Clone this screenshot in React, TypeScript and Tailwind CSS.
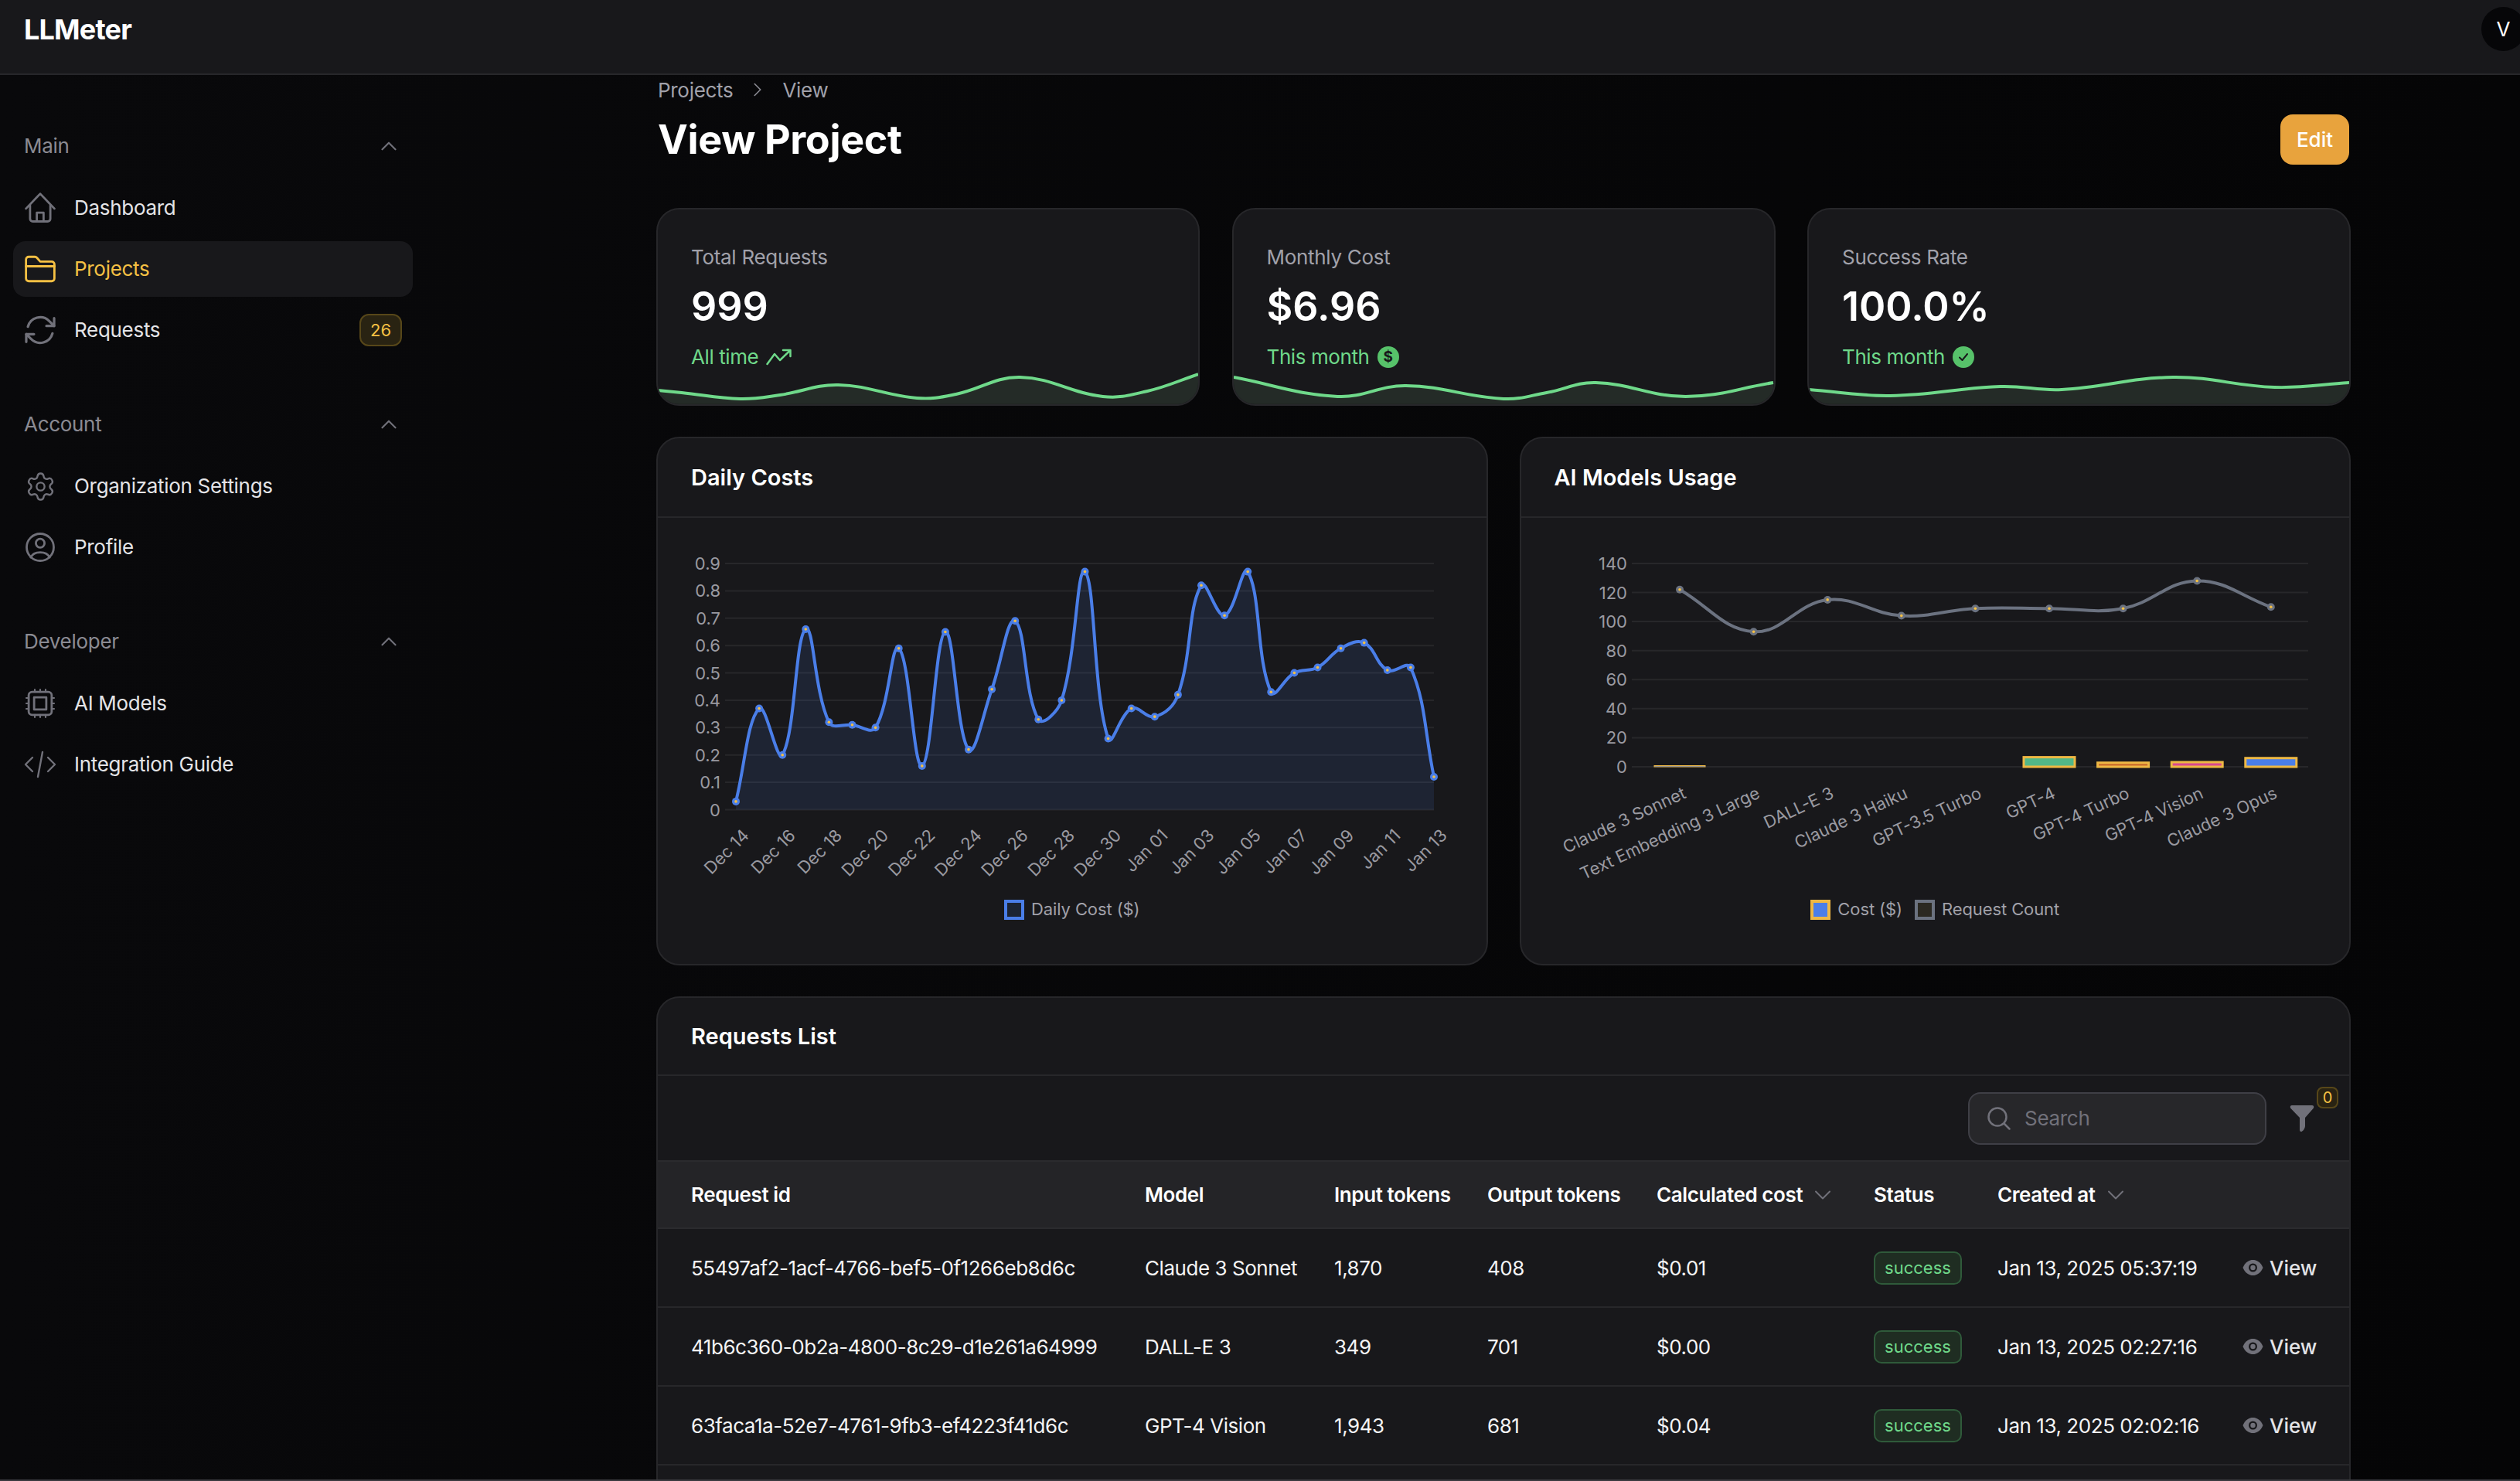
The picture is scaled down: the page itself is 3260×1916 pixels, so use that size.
import { ChevronDown, ChevronRight, ChevronUp, Settings } from 'lucide-react';
import type { ReactNode } from 'react';

type Pt = [number, number];

// same control points as a chart line with tension
function spline(pts: Pt[], t = 0.4) {
  let d = `M${pts[0][0]} ${pts[0][1]}`;
  const cp = pts.map((p, i) => {
    const a = pts[Math.max(i - 1, 0)];
    const b = pts[Math.min(i + 1, pts.length - 1)];
    const d1 = Math.hypot(p[0] - a[0], p[1] - a[1]);
    const d2 = Math.hypot(b[0] - p[0], b[1] - p[1]);
    const s = d1 + d2 || 1;
    const fa = (t * d1) / s;
    const fb = (t * d2) / s;
    return {
      prev: [p[0] - fa * (b[0] - a[0]), p[1] - fa * (b[1] - a[1])],
      next: [p[0] + fb * (b[0] - a[0]), p[1] + fb * (b[1] - a[1])],
    };
  });
  for (let i = 1; i < pts.length; i++) {
    d += ` C${cp[i - 1].next[0]} ${cp[i - 1].next[1]} ${cp[i].prev[0]} ${cp[i].prev[1]} ${pts[i][0]} ${pts[i][1]}`;
  }
  return d;
}

const costValues = [
  0.03, 0.37, 0.2, 0.66, 0.32, 0.31, 0.3, 0.59, 0.16, 0.65, 0.22, 0.44, 0.69, 0.33, 0.4, 0.87, 0.26, 0.37, 0.34, 0.42,
  0.82, 0.71, 0.87, 0.43, 0.5, 0.52, 0.59, 0.61, 0.51, 0.52, 0.12,
];
const costTicks = ['0', '0.1', '0.2', '0.3', '0.4', '0.5', '0.6', '0.7', '0.8', '0.9'];
const costLabels = [
  'Dec 14', 'Dec 16', 'Dec 18', 'Dec 20', 'Dec 22', 'Dec 24', 'Dec 26', 'Dec 28', 'Dec 30',
  'Jan 01', 'Jan 03', 'Jan 05', 'Jan 07', 'Jan 09', 'Jan 11', 'Jan 13',
];

const models = [
  { name: 'Claude 3 Sonnet', count: 122, cost: 0.8, color: '#4a7ee8' },
  { name: 'Text Embedding 3 Large', count: 93, cost: 0, color: '#4a7ee8' },
  { name: 'DALL-E 3', count: 115, cost: 0, color: '#4a7ee8' },
  { name: 'Claude 3 Haiku', count: 104, cost: 0, color: '#4a7ee8' },
  { name: 'GPT-3.5 Turbo', count: 109, cost: 0, color: '#4a7ee8' },
  { name: 'GPT-4', count: 109, cost: 6.6, color: '#52b788' },
  { name: 'GPT-4 Turbo', count: 109, cost: 2.8, color: '#c96a2c' },
  { name: 'GPT-4 Vision', count: 128, cost: 3.2, color: '#d9488f' },
  { name: 'Claude 3 Opus', count: 110, cost: 6, color: '#4a7ee8' },
];

const rows = [
  { id: '55497af2-1acf-4766-bef5-0f1266eb8d6c', model: 'Claude 3 Sonnet', input: '1,870', output: '408', cost: '$0.01', at: 'Jan 13, 2025 05:37:19' },
  { id: '41b6c360-0b2a-4800-8c29-d1e261a64999', model: 'DALL-E 3', input: '349', output: '701', cost: '$0.00', at: 'Jan 13, 2025 02:27:16' },
  { id: '63faca1a-52e7-4761-9fb3-ef4223f41d6c', model: 'GPT-4 Vision', input: '1,943', output: '681', cost: '$0.04', at: 'Jan 13, 2025 02:02:16' },
];

function Svg24({ children, box = '0 0 24 24' }: { children: ReactNode; box?: string }) {
  return (
    <svg viewBox={box} fill="none" stroke="currentColor" strokeWidth="1.6" strokeLinecap="round" strokeLinejoin="round" className="w-[42px] h-[42px]">
      {children}
    </svg>
  );
}

const HomeIcon = () => (
  <Svg24>
    <path d="M1.5 12.5 12 1.5l10.5 11" />
    <path d="M4.5 10v10a2 2 0 0 0 2 2h11a2 2 0 0 0 2-2V10" />
    <path d="M9.5 22v-6.5h5V22" />
  </Svg24>
);
const FolderIcon = () => (
  <Svg24>
    <path d="M1.5 5a2 2 0 0 1 2-2h4.6a2 2 0 0 1 1.5.7L12 6.5h8.500a2 2 0 0 1 2 2V19a2 2 0 0 1-2 2h-17a2 2 0 0 1-2-2Z" />
    <path d="M1.5 10h21" />
  </Svg24>
);
const RefreshIcon = () => (
  <Svg24 box="1.5 1.5 21 21">
    <path d="M16.02 9.35h5V4.36" />
    <path d="M2.98 19.64v-4.99h5" />
    <path d="M2.98 14.65l3.18 3.18a8.25 8.25 0 0 0 13.8-3.7" />
    <path d="M4.03 9.87a8.25 8.25 0 0 1 13.8-3.7l3.18 3.18" />
  </Svg24>
);
const ProfileIcon = () => (
  <Svg24>
    <circle cx="12" cy="12" r="10" />
    <circle cx="12" cy="9" r="3.2" />
    <path d="M5 19.500c1.200-2.600 4-3.700 7-3.700s5.800 1.100 7 3.700" />
  </Svg24>
);
const CpuIcon = () => (
  <Svg24>
    <rect x="3.500" y="3.500" width="17" height="17" rx="2.500" />
    <rect x="7.500" y="7.500" width="9" height="9" />
    <path d="M8 1.700v1.800M12 1.700v1.800M16 1.700v1.800M8 20.500v1.800M12 20.500v1.800M16 20.500v1.800M1.700 8h1.800M1.700 12h1.800M1.700 16h1.800M20.500 8h1.800M20.500 12h1.800M20.500 16h1.800" strokeWidth="1.200" />
  </Svg24>
);
const CodeIcon = () => (
  <svg viewBox="0 0 42 38" fill="none" stroke="currentColor" strokeWidth="2.400" strokeLinecap="round" strokeLinejoin="round" className="w-[42px] h-[38px]">
    <path d="M11 10 2 19l9 9M31 10l9 9-9 9M24 3l-6 32" />
  </svg>
);

function NavItem({ icon, label, active, badge }: { icon: ReactNode; label: string; active?: boolean; badge?: string }) {
  return (
    <div className={`flex items-center h-[72px] pl-[14px] pr-[14px] rounded-[16px] ${active ? 'bg-[#18181b]' : ''}`}>
      <span className={`w-[42px] h-[42px] flex items-center justify-center shrink-0 ${active ? 'text-[#f5c043]' : 'text-[#71717a]'}`}>{icon}</span>
      <span className={`ml-[23px] flex-1 text-[26px] leading-[32px] tracking-[-0.3px] ${active ? 'text-[#f5c043]' : 'text-[#e4e4e7]'}`}>{label}</span>
      {badge && (
        <span className="w-[55px] h-[42px] flex items-center justify-center rounded-[12px] border-2 border-[#574719] bg-[#292312] text-[22px] text-[#f5c043]">{badge}</span>
      )}
    </div>
  );
}

function NavSection({ title, children }: { title: string; children: ReactNode }) {
  return (
    <div className="mb-[70px]">
      <div className="flex items-center justify-between px-[14px] h-[32px] mb-[28px]">
        <span className="text-[26px] leading-[32px] tracking-[-0.3px] text-[#8b8b93]">{title}</span>
        <ChevronUp size={34} strokeWidth={1.500} className="text-[#71717a]" />
      </div>
      <div className="flex flex-col gap-[7px]">{children}</div>
    </div>
  );
}

function StatCard({ label, value, sub, icon, line }: { label: string; value: string; sub: string; icon: ReactNode; line: Pt[] }) {
  const d = spline(line);
  return (
    <div className="h-[256px] rounded-[30px] border-2 border-[#27272a] bg-[#18181b] overflow-hidden flex flex-col">
      <div className="px-[43px] pt-[46px] flex-1">
        <div className="text-[26px] leading-[32px] tracking-[-0.3px] text-[#a1a1aa]">{label}</div>
        <div className="mt-[18px] text-[52px] leading-[60px] font-semibold text-white">{value}</div>
        <div className="mt-[19px] flex items-center gap-[10px] text-[26px] leading-[32px] tracking-[-0.4px] text-[#6fd98a]">
          {sub}
          {icon}
        </div>
      </div>
      <svg viewBox="0 0 703 45" className="block w-full h-[45px] shrink-0">
        <path d={`${d} L703 45 L0 45 Z`} fill="#242b27" />
        <path d={d} fill="none" stroke="#6fd98a" strokeWidth="4" />
      </svg>
    </div>
  );
}

function ChartCard({ title, children }: { title: string; children: ReactNode }) {
  return (
    <div className="h-[684px] rounded-[30px] border-2 border-[#27272a] bg-[#18181b] overflow-hidden flex flex-col">
      <div className="h-[103px] shrink-0 border-b-2 border-[#27272a] flex items-center px-[43px] text-[29px] font-semibold text-white">{title}</div>
      {children}
    </div>
  );
}

function LegendItem({ label, border, fill }: { label: string; border: string; fill: string }) {
  return (
    <span className="flex items-center gap-[9px]">
      <span className={`w-[26px] h-[26px] border-4 ${border} ${fill}`} />
      <span className="text-[22px] tracking-[-0.1px] text-[#a1a1aa]">{label}</span>
    </span>
  );
}

function DailyCostChart() {
  const yOf = (v: number) => 1047.5 - v * 353.9;
  const xOf = (i: number) => 952 + i * 30.1;
  const pts = costValues.map((v, i) => [xOf(i), yOf(v)] as Pt);
  const d = spline(pts);
  return (
    <svg viewBox="851 670 1071 480" className="block w-[1071px] h-[480px] shrink-0">
      {costTicks.map((t, i) => (
        <g key={t}>
          <line x1="938" x2="1855" y1={yOf(i / 10)} y2={yOf(i / 10)} stroke="#27272a" strokeWidth="2" />
          <text x="932" y={yOf(i / 10) + 8} textAnchor="end" className="text-[22px] fill-[#9a9aa1]">{t}</text>
        </g>
      ))}
      <path d={`${d} L1855 1047.500 L952 1047.500 Z`} fill="#4a7ee8" fillOpacity="0.12" />
      <path d={d} fill="none" stroke="#4a7ee8" strokeWidth="4" />
      {pts.map(p => (
        <g key={p[0]}>
          <circle cx={p[0]} cy={p[1]} r="5" fill="#4a7ee8" />
          <circle cx={p[0]} cy={p[1]} r="1.800" fill="#f5c043" />
        </g>
      ))}
      {costLabels.map((l, i) => (
        <text key={l} transform={`translate(${xOf(i * 2) + 14} 1078) rotate(-45)`} textAnchor="end" dominantBaseline="middle" className="text-[22px] fill-[#9a9aa1]">{l}</text>
      ))}
    </svg>
  );
}

function ModelsChart() {
  const yOf = (v: number) => 992 - v * 1.879;
  const xOf = (i: number) => 2172 + i * 95.6;
  const pts = models.map((m, i) => [xOf(i), yOf(m.count)] as Pt);
  return (
    <svg viewBox="1967 670 1071 480" className="block w-[1071px] h-[480px] shrink-0">
      {[0, 20, 40, 60, 80, 100, 120, 140].map(t => (
        <g key={t}>
          <line x1="2110" x2="2985" y1={yOf(t)} y2={yOf(t)} stroke="#27272a" strokeWidth="2" />
          <text x="2104" y={yOf(t) + 8} textAnchor="end" className="text-[22px] fill-[#9a9aa1]">{t}</text>
        </g>
      ))}
      {models.map((m, i) =>
        m.cost > 0 ? (
          <rect
            key={m.name}
            x={xOf(i) - 33}
            y={yOf(m.cost)}
            width="66"
            height={m.cost * 1.879}
            fill={m.color}
            stroke="#eeb844"
            strokeWidth={m.cost < 2 ? 1 : 3}
          />
        ) : null,
      )}
      <path d={spline(pts)} fill="none" stroke="#6b7280" strokeWidth="4" />
      {pts.map(p => (
        <g key={p[0]}>
          <circle cx={p[0]} cy={p[1]} r="5" fill="#6b7280" />
          <circle cx={p[0]} cy={p[1]} r="1.800" fill="#f5c043" />
        </g>
      ))}
      {models.map((m, i) => (
        <text key={m.name} transform={`translate(${xOf(i) + 7} 1026) rotate(-25)`} textAnchor="end" dominantBaseline="middle" className="text-[22px] fill-[#9a9aa1]">{m.name}</text>
      ))}
    </svg>
  );
}

function EyeIcon() {
  return (
    <svg viewBox="0 0 27 22" className="w-[27px] h-[22px] shrink-0">
      <path d="M0.500 11C3.500 3.500 9 1 13.500 1S23.500 3.500 26.500 11C23.500 18.500 18 21 13.500 21S3.500 18.500 0.500 11Z" fill="#71717a" />
      <circle cx="13.500" cy="11" r="5.500" fill="#18181b" />
      <circle cx="13.500" cy="11" r="3.200" fill="#71717a" />
    </svg>
  );
}

function HeadCell({ children, sort }: { children: ReactNode; sort?: boolean }) {
  return (
    <th className="pl-[43px] text-left text-[26px] font-semibold tracking-[-0.4px] text-white whitespace-nowrap">
      <span className="flex items-center">
        {children}
        {sort && <ChevronDown size={36} strokeWidth={1.300} className="ml-[8px] text-[#71717a]" />}
      </span>
    </th>
  );
}

export default function App() {
  return (
    <div className="w-[3260px] h-[1916px] overflow-hidden flex flex-col bg-gradient-to-r from-[#09090b] to-[#050506] font-[Inter,sans-serif]">
      <header className="h-[97px] shrink-0 bg-[#18181b] border-b-2 border-[#27272a] overflow-hidden pl-[31px]">
        <div className="mt-[9px] h-[57px] flex items-center justify-between">
          <span className="text-[36px] font-bold text-white tracking-[-0.8px]">LLMeter</span>
          <span className="w-[57px] h-[57px] -mr-[7px] rounded-full bg-[#060608] flex items-center justify-center text-[26px] text-white">V</span>
        </div>
      </header>

      <div className="flex flex-1 min-h-0">
        <aside className="w-[540px] shrink-0 pl-[17px] pr-[6px] pt-[76px]">
          <NavSection title="Main">
            <NavItem icon={<HomeIcon />} label="Dashboard" />
            <NavItem icon={<FolderIcon />} label="Projects" active />
            <NavItem icon={<RefreshIcon />} label="Requests" badge="26" />
          </NavSection>
          <NavSection title="Account">
            <NavItem icon={<Settings size={41} strokeWidth={1.400} />} label="Organization Settings" />
            <NavItem icon={<ProfileIcon />} label="Profile" />
          </NavSection>
          <NavSection title="Developer">
            <NavItem icon={<CpuIcon />} label="AI Models" />
            <NavItem icon={<CodeIcon />} label="Integration Guide" />
          </NavSection>
        </aside>

        <main className="flex-1 min-w-0 overflow-hidden pl-[309px] pr-[219px] pt-[3px]">
          <div className="flex items-center h-[32px] pl-[2px] text-[26px] tracking-[-0.3px] text-[#a1a1aa]">
            Projects
            <ChevronRight size={30} strokeWidth={1.300} className="mx-[17px] text-[#8b8b93]" />
            View
          </div>
          <div className="mt-[16px] h-[65px] flex items-center justify-between">
            <h1 className="pl-[2px] text-[52px] font-bold tracking-[-0.35px] text-white">View Project</h1>
            <button className="w-[89px] h-[65px] mr-[2px] rounded-[16px] bg-[#e8a33d] text-[26px] font-medium text-white">Edit</button>
          </div>

          <div className="mt-[56px] grid grid-cols-3 gap-[41.500px]">
            <StatCard
              label="Total Requests"
              value="999"
              sub="All time"
              line={[[0, 27], [31, 30], [107, 38], [159, 33], [235, 20], [337, 37], [388, 32], [471, 10], [579, 35], [637, 28], [703, 6]]}
              icon={
                <svg viewBox="0 0 33 22" fill="none" stroke="currentColor" strokeWidth="2.500" strokeLinecap="round" strokeLinejoin="round" className="w-[33px] h-[22px]">
                  <path d="M1.500 20 11 7l7 8L31 2.500M22 2h9.500v8" />
                </svg>
              }
            />
            <StatCard
              label="Monthly Cost"
              value="$6.96"
              sub="This month"
              line={[[0, 10], [135, 35], [224, 21], [351, 38], [407, 30], [471, 17], [588, 35], [702, 17]]}
              icon={<span className="w-[28px] h-[28px] rounded-full bg-[#57c26a] flex items-center justify-center text-[19px] font-bold text-[#18181b]">$</span>}
            />
            <StatCard
              label="Success Rate"
              value="100.0%"
              sub="This month"
              line={[[0, 26], [106, 34], [249, 22], [329, 26], [474, 10], [606, 23], [703, 17]]}
              icon={
                <span className="w-[28px] h-[28px] rounded-full bg-[#57c26a] flex items-center justify-center">
                  <svg viewBox="0 0 16 16" fill="none" stroke="#18181b" strokeWidth="2" strokeLinecap="round" strokeLinejoin="round" className="w-[16px] h-[16px]">
                    <path d="M3 8.500 6.500 12 13 4" />
                  </svg>
                </span>
              }
            />
          </div>

          <div className="mt-[40px] grid grid-cols-2 gap-[41px]">
            <ChartCard title="Daily Costs">
              <DailyCostChart />
              <div className="mt-[10px] flex justify-center">
                <LegendItem label="Daily Cost ($)" border="border-[#4a7ee8]" fill="bg-[#1c2433]" />
              </div>
            </ChartCard>
            <ChartCard title="AI Models Usage">
              <ModelsChart />
              <div className="mt-[10px] flex justify-center gap-[16px]">
                <LegendItem label="Cost ($)" border="border-[#eeb844]" fill="bg-[#4a7ee8]" />
                <LegendItem label="Request Count" border="border-[#6b7280]" fill="bg-[#2b2922]" />
              </div>
            </ChartCard>
          </div>

          <div className="mt-[40px] h-[700px] rounded-t-[30px] border-2 border-[#27272a] bg-[#18181b] overflow-hidden">
            <div className="h-[101px] border-b-2 border-[#27272a] flex items-center px-[43px] text-[29px] font-semibold text-white">Requests List</div>
            <div className="h-[109px] flex items-center justify-end pr-[45px]">
              <div className="w-[386px] h-[68px] rounded-[16px] border-2 border-[#3f3f46] bg-[#27272a] flex items-center pl-[23px]">
                <svg viewBox="0 0 30 30" fill="none" stroke="#71717a" strokeWidth="2.500" strokeLinecap="round" className="w-[30px] h-[30px]">
                  <circle cx="13" cy="13" r="11.500" />
                  <path d="M22 22l6.500 6.500" />
                </svg>
                <span className="ml-[18px] text-[26px] tracking-[-0.3px] text-[#71717a]">Search</span>
              </div>
              <div className="relative ml-[30px] w-[32px] h-[36px]">
                <svg viewBox="0 0 32 36" className="w-[32px] h-[36px]">
                  <path d="M3 1H29Q32 1 31 4.500L20 17V28Q20 30 18 33L15.500 35Q13 35.500 13 33V17L1 4.500Q0 1 3 1Z" fill="#71717a" />
                </svg>
                <span className="absolute -top-[23px] left-[35px] w-[28px] h-[28px] rounded-[8px] border-2 border-[#574719] bg-[#292312] flex items-center justify-center text-[20px] text-[#f5c043]">0</span>
              </div>
            </div>
            <table className="w-[2188px] table-fixed border-collapse">
              <colgroup>
                <col className="w-[587px]" />
                <col className="w-[245px]" />
                <col className="w-[198px]" />
                <col className="w-[219px]" />
                <col className="w-[281px]" />
                <col className="w-[160px]" />
                <col className="w-[317px]" />
                <col className="w-[181px]" />
              </colgroup>
              <thead>
                <tr className="h-[87px] bg-[#242427] border-y-2 border-[#2b2b2e]">
                  <HeadCell>Request id</HeadCell>
                  <HeadCell>Model</HeadCell>
                  <HeadCell>Input tokens</HeadCell>
                  <HeadCell>Output tokens</HeadCell>
                  <HeadCell sort>Calculated cost</HeadCell>
                  <HeadCell>Status</HeadCell>
                  <HeadCell sort>Created at</HeadCell>
                  <th />
                </tr>
              </thead>
              <tbody>
                {rows.map(row => (
                  <tr key={row.id} className="h-[102px] border-b-2 border-[#27272a] text-[26px] tracking-[-0.45px] text-[#f4f4f5]">
                    <td className="pl-[43px] whitespace-nowrap">{row.id}</td>
                    <td className="pl-[43px] whitespace-nowrap">{row.model}</td>
                    <td className="pl-[43px]">{row.input}</td>
                    <td className="pl-[43px]">{row.output}</td>
                    <td className="pl-[43px]">{row.cost}</td>
                    <td className="pl-[43px]">
                      <span className="inline-flex items-center justify-center w-[114px] h-[43px] rounded-[10px] border-2 border-[#2f5a3a] bg-[#1f2d22] text-[22px] tracking-normal text-[#6fd98a]">success</span>
                    </td>
                    <td className="pl-[43px] whitespace-nowrap">{row.at}</td>
                    <td className="pl-[43px]">
                      <span className="flex items-center gap-[8px] font-medium tracking-normal text-[#e4e4e7]">
                        <EyeIcon />
                        View
                      </span>
                    </td>
                  </tr>
                ))}
              </tbody>
            </table>
          </div>
        </main>
      </div>
      <div className="h-[2px] shrink-0 bg-[#3a3a3f]" />
    </div>
  );
}
